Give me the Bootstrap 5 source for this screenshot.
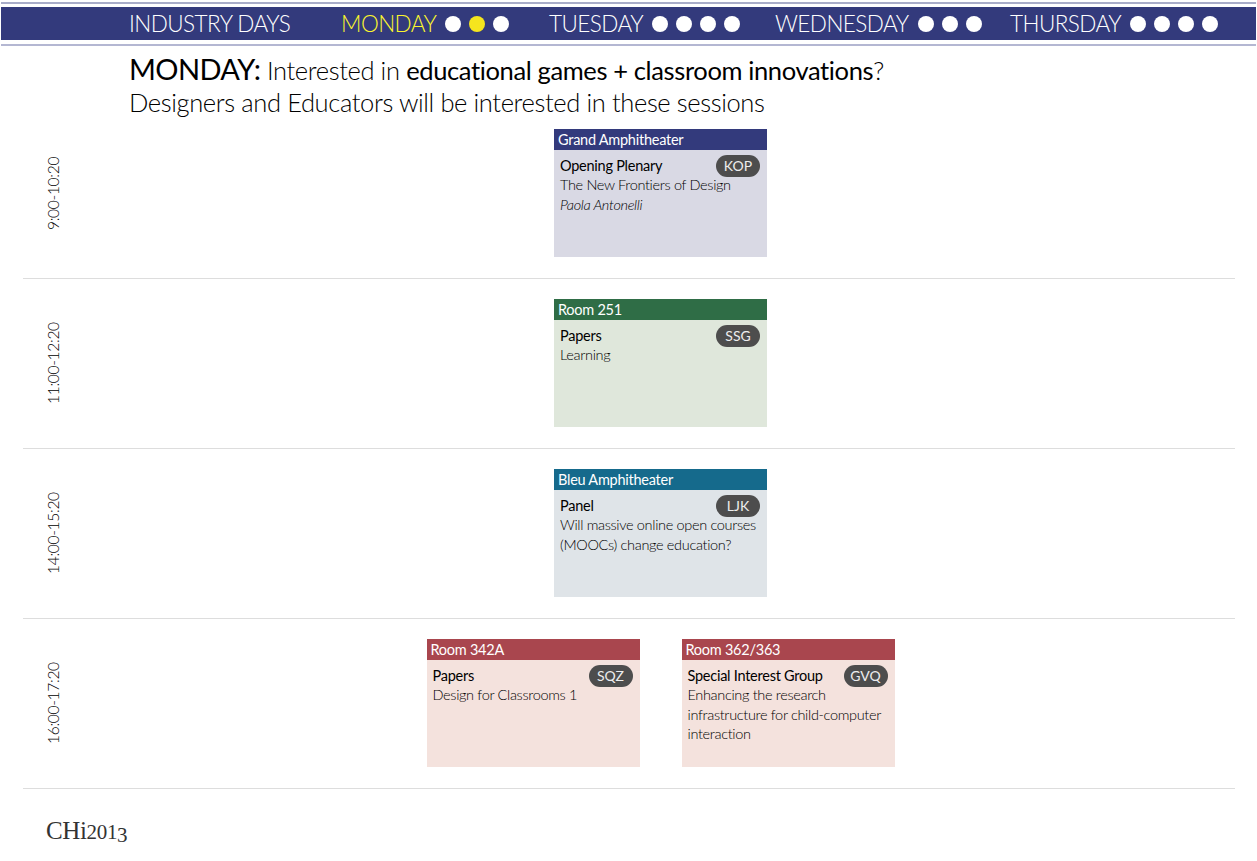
<!DOCTYPE html>
<html lang="en">
<head>
<meta charset="utf-8">
<title>CHI 2013 Monday</title>
<link href="https://cdn.jsdelivr.net/npm/bootstrap@5.3.0/dist/css/bootstrap.min.css" rel="stylesheet">
<style>
html,body{height:861px;overflow:hidden;background:#fff}
body{font-family:"Lato","Noto Sans",sans-serif;font-weight:300;color:#222}
.topwrap{padding:2px 1px 0 1px}
.topline{border-top:2px solid #a9adc9;padding:3px 0 4px;border-bottom:0}
.topbar{background:#333a7c;height:33px;padding-left:128px;color:#fff;font-size:22.5px;letter-spacing:-.55px;line-height:33px}
.botline{height:2px;background:#b4b7d2;margin-top:4px}
.nav-i0{width:212px}.nav-i1{width:208px}.nav-i2{width:226px}.nav-i3{width:235px}
.nav-lbl{margin-right:9px}
.nav-cur{color:#fbf52c}
.dots{gap:8px}
.dotc{width:16px;height:16px;border-radius:50%;background:#fff}
.dotc.on{background:#f5e51e}
.intro{padding-left:129px;margin-top:3px;height:56px;font-size:25.5px;line-height:32px;letter-spacing:-.37px;color:#000;white-space:nowrap}
.intro .big{font-size:29px;font-weight:400;color:#000;letter-spacing:-.6px}
.intro b{font-weight:400;color:#000}
.slots{margin:0 22px 0 23px}
.slotrow{height:170px;border-bottom:1px solid #ddd}
.timecol{width:63px;padding-right:19px;writing-mode:vertical-rl;transform:rotate(180deg);font-size:15.5px;letter-spacing:-.3px;color:#000}
.slotbody{padding-top:20px;gap:42px}
.sess{width:213px;height:128px}
.sess-head{height:21px;line-height:21px;color:#fff;font-size:14.5px;font-weight:400;padding-left:4px;letter-spacing:-.25px}
.sess-body{padding:5px 7px 5px 6px;font-size:14.5px;line-height:19.5px;letter-spacing:-.33px;color:#000}
.sess-title{height:20px;font-weight:400;color:#000;letter-spacing:-.25px}
.sess-title>span:first-child{padding-top:1px}
.pill{background:#4d4d4d;color:#eee;width:44px;height:22px;border-radius:11px;text-align:center;line-height:22px;font-size:14px;font-weight:400;letter-spacing:0}
.c-navy .sess-head{background:#333a7c}.c-navy .sess-body{background:#d9d9e4}
.c-green .sess-head{background:#2f6d46}.c-green .sess-body{background:#dfe7db}
.c-teal .sess-head{background:#156a8c}.c-teal .sess-body{background:#dfe4e8}
.c-red .sess-head{background:#a9464e}.c-red .sess-body{background:#f4e2dd}
.chilogo{font-family:"Liberation Serif",serif;font-size:25px;line-height:30px;color:#333;padding:27px 0 0 23px;letter-spacing:-.4px}
.logo-num{font-size:21px;letter-spacing:-.3px}
.logo-drop{vertical-align:-3px}
</style>
</head>
<body>
<div class="topwrap">
  <div class="topline">
    <div class="topbar d-flex align-items-center">
      <div class="nav-i0 text-nowrap">INDUSTRY DAYS</div>
      <div class="nav-i1 d-flex align-items-center text-nowrap nav-cur"><span class="nav-lbl">MONDAY</span><div class="d-flex dots"><i class="dotc"></i><i class="dotc on"></i><i class="dotc"></i></div></div>
      <div class="nav-i2 d-flex align-items-center text-nowrap"><span class="nav-lbl">TUESDAY</span><div class="d-flex dots"><i class="dotc"></i><i class="dotc"></i><i class="dotc"></i><i class="dotc"></i></div></div>
      <div class="nav-i3 d-flex align-items-center text-nowrap"><span class="nav-lbl">WEDNESDAY</span><div class="d-flex dots"><i class="dotc"></i><i class="dotc"></i><i class="dotc"></i></div></div>
      <div class="d-flex align-items-center text-nowrap"><span class="nav-lbl">THURSDAY</span><div class="d-flex dots"><i class="dotc"></i><i class="dotc"></i><i class="dotc"></i><i class="dotc"></i></div></div>
    </div>
    <div class="botline"></div>
  </div>
</div>
<div class="intro"><span class="big">MONDAY:</span> Interested in <b>educational games + classroom innovations</b>?<br>Designers and Educators will be interested in these sessions</div>
<div class="slots">
  <div class="slotrow d-flex">
    <div class="timecol text-center">9:00-10:20</div>
    <div class="slotbody flex-grow-1 d-flex justify-content-center">
      <div class="sess c-navy d-flex flex-column"><div class="sess-head">Grand Amphitheater</div><div class="sess-body flex-grow-1"><div class="sess-title d-flex justify-content-between"><span>Opening Plenary</span><span class="pill">KOP</span></div><div>The New Frontiers of Design</div><div class="fst-italic">Paola Antonelli</div></div></div>
    </div>
  </div>
  <div class="slotrow d-flex">
    <div class="timecol text-center">11:00-12:20</div>
    <div class="slotbody flex-grow-1 d-flex justify-content-center">
      <div class="sess c-green d-flex flex-column"><div class="sess-head">Room 251</div><div class="sess-body flex-grow-1"><div class="sess-title d-flex justify-content-between"><span>Papers</span><span class="pill">SSG</span></div><div>Learning</div></div></div>
    </div>
  </div>
  <div class="slotrow d-flex">
    <div class="timecol text-center">14:00-15:20</div>
    <div class="slotbody flex-grow-1 d-flex justify-content-center">
      <div class="sess c-teal d-flex flex-column"><div class="sess-head">Bleu Amphitheater</div><div class="sess-body flex-grow-1"><div class="sess-title d-flex justify-content-between"><span>Panel</span><span class="pill">LJK</span></div><div>Will massive online open courses (MOOCs) change education?</div></div></div>
    </div>
  </div>
  <div class="slotrow d-flex">
    <div class="timecol text-center">16:00-17:20</div>
    <div class="slotbody flex-grow-1 d-flex justify-content-center">
      <div class="sess c-red d-flex flex-column"><div class="sess-head">Room 342A</div><div class="sess-body flex-grow-1"><div class="sess-title d-flex justify-content-between"><span>Papers</span><span class="pill">SQZ</span></div><div>Design for Classrooms 1</div></div></div>
      <div class="sess c-red d-flex flex-column"><div class="sess-head">Room 362/363</div><div class="sess-body flex-grow-1"><div class="sess-title d-flex justify-content-between"><span>Special Interest Group</span><span class="pill">GVQ</span></div><div>Enhancing the research infrastructure for child-computer interaction</div></div></div>
    </div>
  </div>
  <div class="chilogo">CHi<span class="logo-num">201<span class="logo-drop">3</span></span></div>
</div>
<script src="https://cdn.jsdelivr.net/npm/bootstrap@5.3.0/dist/js/bootstrap.bundle.min.js"></script>
</body>
</html>
